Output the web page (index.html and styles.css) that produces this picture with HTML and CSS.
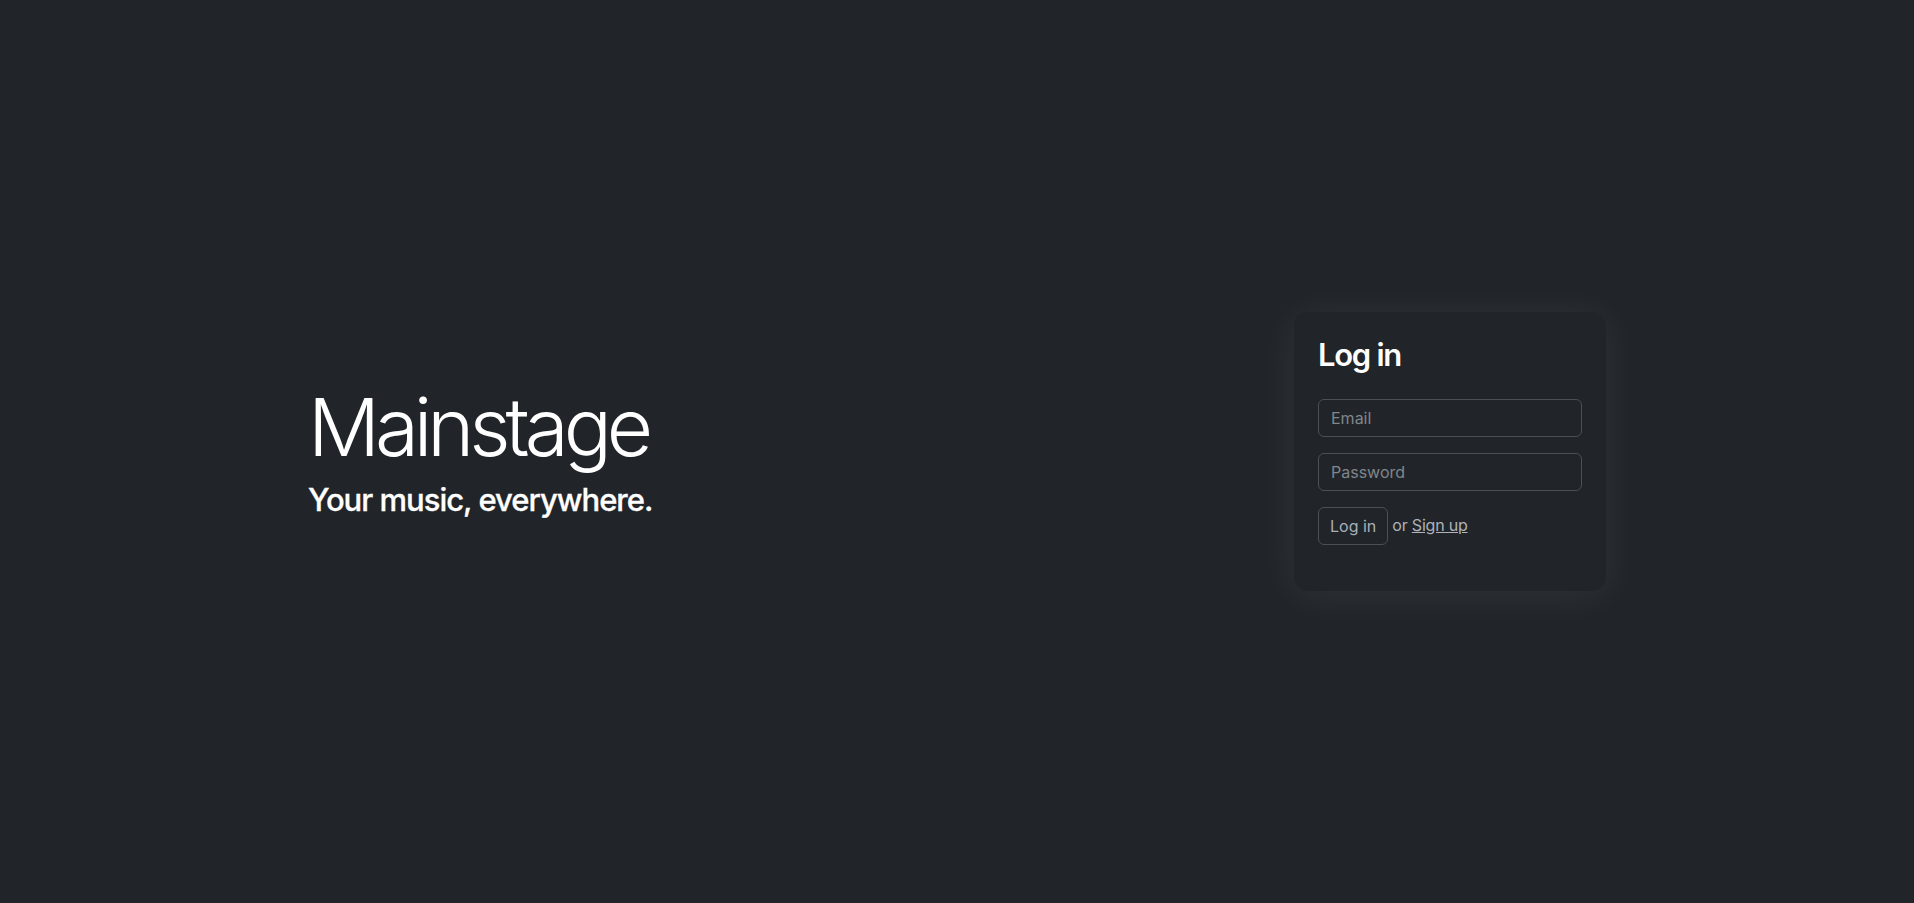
FILE: index.html
```html
<!DOCTYPE html>
<html lang="en">
<head>
<meta charset="utf-8">
<title>Mainstage</title>
<link rel="stylesheet" href="styles.css">
</head>
<body>
<main class="page">
  <div class="container">
    <div class="hero">
      <h1 class="brand">Mainstage</h1>
      <p class="tagline">Your music, everywhere.</p>
    </div>
    <div class="card">
      <h2 class="card-title">Log in</h2>
      <form class="login-form">
        <input class="field" type="email" placeholder="Email">
        <input class="field" type="password" placeholder="Password">
        <div class="actions">
          <button class="btn" type="button">Log in</button>
          <span class="or">or <a class="link" href="#">Sign up</a></span>
        </div>
      </form>
    </div>
  </div>
</main>
</body>
</html>
```

FILE: styles.css
```css
* { box-sizing: border-box; }
html, body { margin: 0; padding: 0; }
body {
  background: #212529;
  color: #dee2e6;
  font-family: Inter, "Noto Sans", "Liberation Sans", sans-serif;
  font-size: 16px;
  line-height: 1.5;
}
.page {
  min-height: 100vh;
  display: flex;
  align-items: center;
}
.container {
  width: 1298px;
  margin: 0 auto;
  display: flex;
  align-items: center;
  justify-content: space-between;
}
.hero {
  margin-bottom: 5px;
}
.brand {
  margin: 0 0 6px;
  font-size: 80px;
  font-weight: 300;
  line-height: 96px;
  color: #fff;
  letter-spacing: -5.1px;
}
.tagline {
  margin: 0;
  font-size: 31px;
  font-weight: 500;
  line-height: 38px;
  color: #fff;
  letter-spacing: -1px;
  -webkit-text-stroke: 0.3px #fff;
}
.card {
  width: 312px;
  padding: 24px 24px 46px;
  background: #212529;
  border-radius: 14px;
  box-shadow: 0 4px 40px rgba(255, 255, 255, 0.07);
}
.card-title {
  margin: 0 0 25px;
  font-size: 31px;
  font-weight: 600;
  line-height: 38px;
  color: #fff;
  letter-spacing: -1.3px;
}
.login-form {
  display: flex;
  flex-direction: column;
  gap: 16px;
}
.field {
  display: block;
  width: 100%;
  height: 38px;
  padding: 6px 12px;
  font: inherit;
  font-size: 16px;
  color: #dee2e6;
  background: #212529;
  border: 1px solid #495057;
  border-radius: 6px;
  outline: none;
}
.field::placeholder { color: #80868c; }
.actions {
  display: flex;
  align-items: center;
  gap: 4px;
}
.btn {
  height: 38px;
  padding: 6px 11px;
  font: inherit;
  font-size: 16px;
  color: #a9afb5;
  background: transparent;
  border: 1px solid #495057;
  border-radius: 6px;
}
.or {
  color: #adb3b9;
  font-size: 16px;
  margin-top: -3px;
  letter-spacing: -0.2px;
}
.link {
  color: #adb3b9;
  text-decoration: underline;
}
```
